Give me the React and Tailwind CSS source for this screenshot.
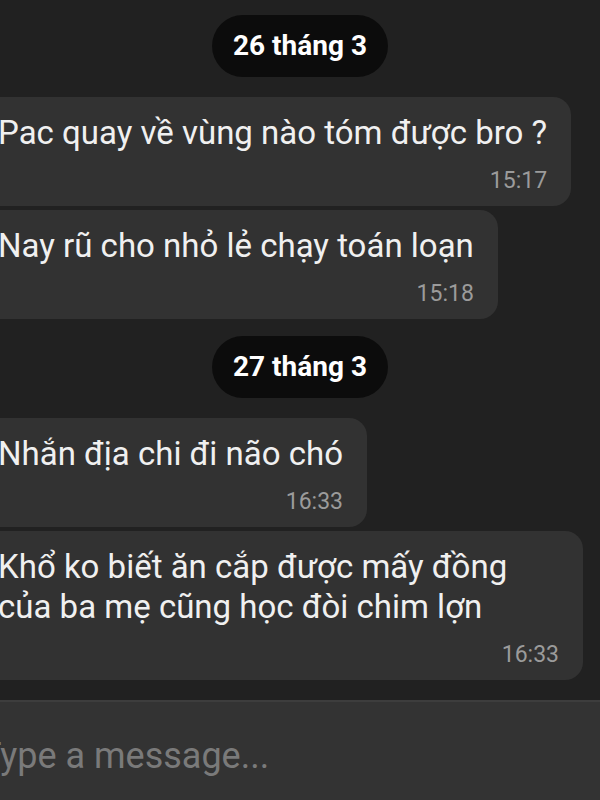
import React from "react";

const days = [
  {
    label: "26 tháng 3",
    messages: [
      { text: "Pac quay về vùng nào tóm được bro ?", time: "15:17" },
      { text: "Nay rũ cho nhỏ lẻ chạy toán loạn", time: "15:18" },
    ],
  },
  {
    label: "27 tháng 3",
    messages: [
      { text: "Nhắn địa chi đi não chó", time: "16:33" },
      { text: "Khổ ko biết ăn cắp được mấy đồng của ba mẹ cũng học đòi chim lợn", time: "16:33" },
    ],
  },
];

const Bubble = ({ text, time }) => (
  <div className="ml-[-26px] w-fit max-w-[609px] rounded-[18px] bg-[#323232] pl-[24px] pr-[24px] pt-[16px] pb-[12px]">
    <div className="text-[33px] leading-[40px] text-[#f0f0f0]">{text}</div>
    <div className="mt-[15px] text-right text-[23px] leading-[26px] text-[#9b9b9b]">{time}</div>
  </div>
);

export default function App() {
  return (
    <div
      className="flex h-[800px] w-[600px] flex-col overflow-hidden bg-[#212121]"
      style={{ fontFamily: "Roboto, 'Noto Sans', sans-serif" }}
    >
      {/* Messages */}
      <div className="flex h-[700px] flex-col">
        {days.map((day, i) => (
          <div key={day.label} className={i === 0 ? "pt-[15px]" : "pt-[17px]"}>
            <div className="flex justify-center">
              <div className="flex h-[62px] items-center rounded-full bg-[#0c0c0c] px-[21px] text-[28px] font-bold text-white">
                {day.label}
              </div>
            </div>
            <div className="mt-[20px] flex flex-col gap-[4px]">
              {day.messages.map((m, j) => (
                <Bubble key={j} text={m.text} time={m.time} />
              ))}
            </div>
          </div>
        ))}
      </div>

      {/* Input */}
      <div className="flex flex-1 items-center border-t-2 border-[#3d3d3d] bg-[#333333]">
        <div className="ml-[-20px] mt-[10px] text-[36px] text-[#7a7a7a]">Type a message...</div>
      </div>
    </div>
  );
}
